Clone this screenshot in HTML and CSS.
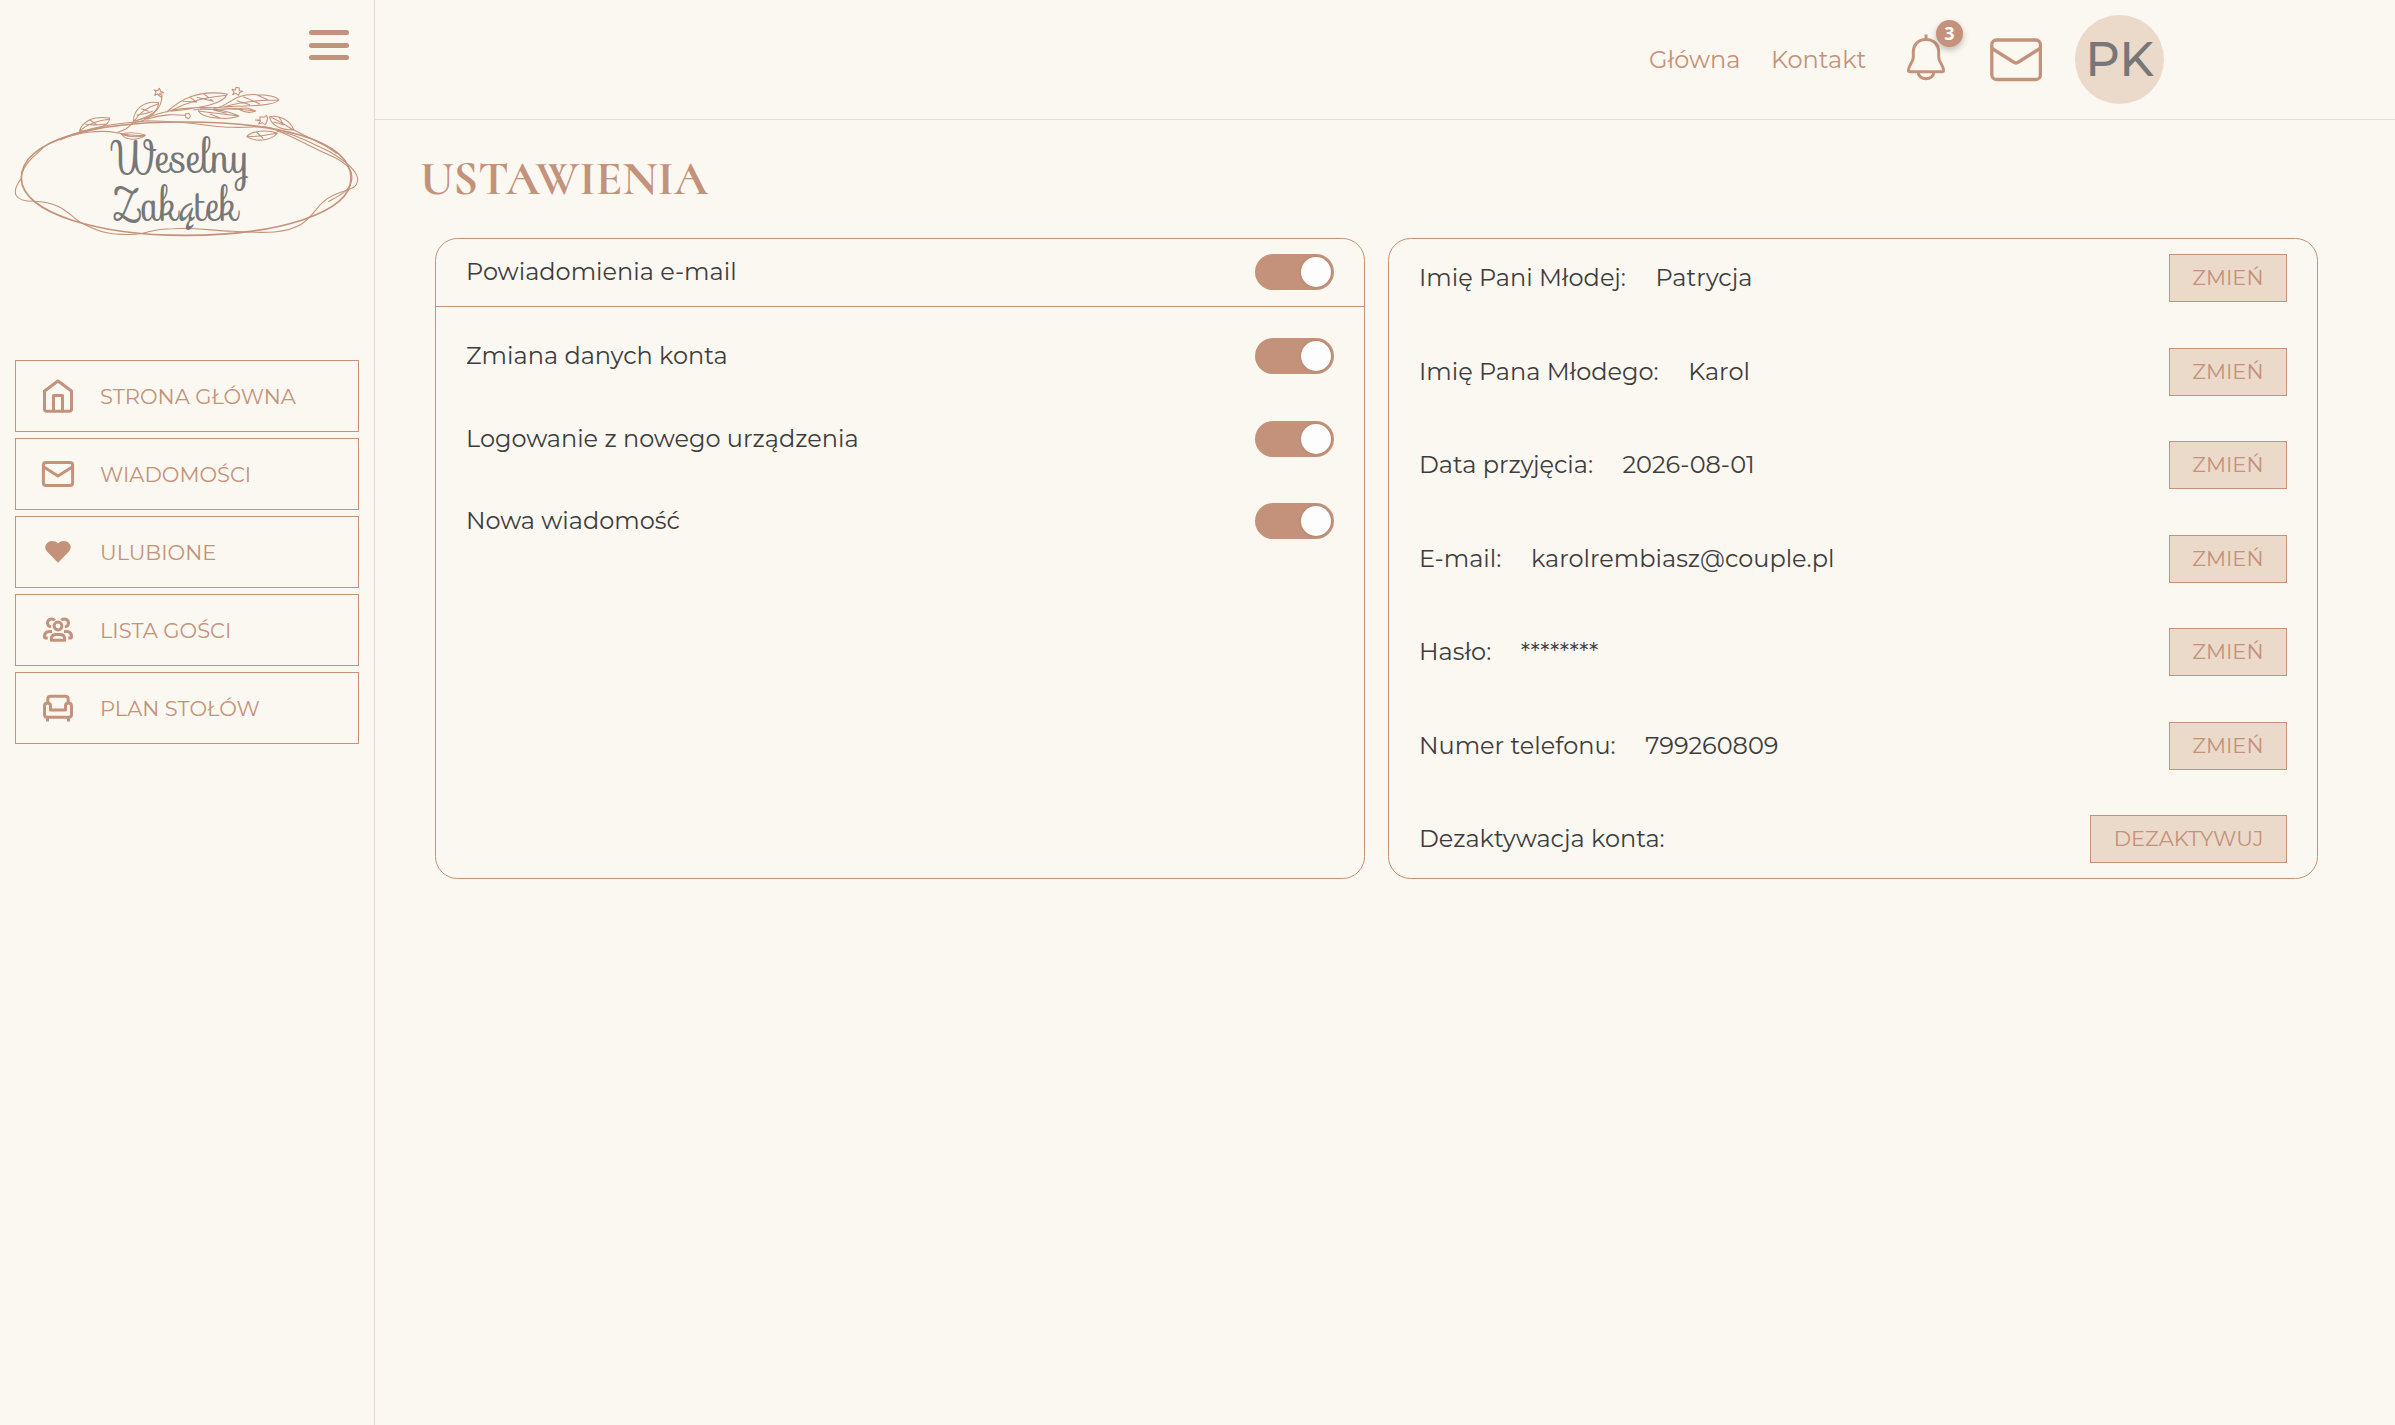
FILE: index.html
```
<!DOCTYPE html>
<html lang="pl">
<head>
<meta charset="utf-8">
<title>Weselny Zakątek – Ustawienia</title>
<link rel="stylesheet" href="styles.css">
</head>
<body>
<div class="layout">
  <aside class="sidebar">
    <button class="burger" aria-label="Menu"><i></i><i></i><i></i></button>
    <svg class="logo" viewBox="0 240 1125 480" fill="none">
      <g class="logo-thick">
        <path d="M64 535C64 420 290 364 555 366C830 366 1053 420 1053 535C1053 640 830 706 555 706C300 706 64 640 64 535Z"/>
      </g>
      <g class="logo-thin">
        <path d="M64 535C30 580 45 604 100 604C190 608 200 640 240 666C300 700 340 706 405 703C450 700 450 686 520 686C600 684 620 690 700 694C800 700 860 700 905 672C950 640 950 610 1000 586C1050 562 1073 570 1073 535C1068 510 1040 485 990 456C930 426 880 400 830 394"/>
        <path d="M66 520C80 480 110 465 130 442C160 418 200 410 240 396C330 366 410 368 440 362C600 364 620 382 700 382C770 384 790 372 830 390C920 430 960 455 1000 470C1040 490 1060 510 1055 540C1050 570 1030 580 985 605"/>
        <path d="M180 420C230 398 300 388 350 398C380 402 370 408 437 406M437 406C410 424 375 420 364 402C390 396 415 398 437 406M368 404C390 412 410 412 434 407"/>
        <path d="M238 394C245 370 270 346 329 354C328 380 290 388 238 394ZM240 392C270 368 300 360 328 358M256 372C275 376 290 376 316 372M270 360L290 374"/>
        <path d="M350 398C385 388 388 378 400 366C400 330 430 300 476 308C474 340 440 352 402 364M402 364C420 336 445 320 474 312M410 345C430 344 440 342 458 334M424 326L446 334"/>
        <path d="M402 368C440 366 488 330 486 285M478 282L486 286L484 292L472 282L464 286L468 276L463 270L473 272L478 265L482 274L491 278L480 280Z"/>
        <path d="M405 362C450 356 460 342 495 336C560 318 640 322 720 326M440 358C490 340 530 344 556 346M500 336C540 300 590 268 682 282C670 312 610 322 512 334M512 332C570 302 620 292 680 286M548 304L590 306L570 292M590 292L640 304L612 282"/>
        <path d="M556 342L566 340L572 348L566 356L557 352ZM580 330C620 322 680 330 717 348C690 360 610 358 594 332M594 332C640 340 680 342 714 348M630 342L660 354M640 330L680 340"/>
        <path d="M640 326C690 322 690 280 770 284C800 284 830 290 837 300C820 318 750 318 670 320M675 320C720 306 760 300 834 300M710 302L750 314M730 290L780 312M770 284L805 300"/>
        <path d="M696 268L706 270L708 262L718 264L718 272L728 274L718 278L716 286L708 280L698 284L702 276ZM716 328C735 320 750 326 767 333C750 340 730 336 716 328M600 326C660 334 680 320 760 332"/>
        <path d="M766 360L780 360L780 350L792 352L800 346L803 356L800 366L796 374L786 368L776 372L782 362ZM808 350C840 344 870 362 882 390C850 390 816 382 808 350M812 352C840 364 860 378 880 390M836 350L850 372M820 366L858 376"/>
        <path d="M740 410C755 392 800 388 832 400C810 424 764 426 740 410M742 410C780 410 800 406 830 400M770 396L790 416M882 390C930 416 990 440 1010 462"/>
      </g>
      <text class="logo-text" x="340" y="518" font-size="138" textLength="410" lengthAdjust="spacingAndGlyphs">Weselny</text>
      <text class="logo-text" x="338" y="662" font-size="138" textLength="378" lengthAdjust="spacingAndGlyphs">Zakątek</text>
    </svg>
    <nav class="menu">
      <a class="menu-item"><svg viewBox="0 0 36 36"><path d="M18 3L31.500 13V31q0 2.300-2.300 2.300H6.800q-2.300 0-2.300-2.300V13ZM13.500 33V17.500h9V33"/></svg><span>STRONA GŁÓWNA</span></a>
      <a class="menu-item"><svg viewBox="0 0 36 36"><rect x="3.400" y="6.400" width="29.200" height="23" rx="2.500"/><path d="M3.800 11L18 20L32.200 11"/></svg><span>WIADOMOŚCI</span></a>
      <a class="menu-item"><svg viewBox="0 0 36 36"><path class="solid" d="M18 28.700L7 17.600C2.500 12 7.500 7 12 7Q15.800 7 18 9.300Q20.200 7 24 7C28.500 7 33.500 12 29 17.600Z"/></svg><span>ULUBIONE</span></a>
      <a class="menu-item"><svg viewBox="0 0 36 36"><circle cx="18" cy="14" r="3.900"/><path d="M11.300 28.300v-1.500q0-4.300 5-4.300h3.400q5 0 5 4.300v1.500zM14.800 8.300C12.500 5.800 7.500 7 7.500 11Q7.600 14.600 11.200 14.700M21.200 8.300C23.500 5.800 28.500 7 28.500 11Q28.400 14.600 24.800 14.700M12 19.500H9.500Q4.500 19.500 4.500 24.700Q4.500 26 6 26H7.700M24 19.500H26.500Q31.500 19.500 31.500 24.700Q31.500 26 30 26H28.300"/></svg><span>LISTA GOŚCI</span></a>
      <a class="menu-item"><svg viewBox="0 0 36 36"><path d="M7.800 13V9q0-2.700 3-2.700h14.400q3 0 3 2.700V13M10.500 16q0-3-3-3t-3 3V24.500q0 2.700 2.700 2.700h21.600q2.700 0 2.700-2.700V16q0-3-3-3t-3 3V20H10.500ZM7.500 27.500V31.500M28.500 27.500V31.500"/></svg><span>PLAN STOŁÓW</span></a>
    </nav>
  </aside>
  <div class="page">
    <header class="topbar">
      <a class="link">Główna</a>
      <a class="link kontakt">Kontakt</a>
      <div class="bell">
        <svg viewBox="0 0 40 50" width="40" height="50"><path d="M20 2.500V8M20 7.500C11 7.500 7.300 14 7.300 20V25C7.300 30.500 2.500 32.500 2.500 38.500Q2.500 39.700 4 39.700H36Q37.500 39.700 37.500 38.500C37.500 32.500 32.700 30.500 32.700 25V20C32.700 14 29 7.500 20 7.500ZM12 40C13 49 27 49 28 40"/></svg>
        <span class="badge">3</span>
      </div>
      <svg class="mail" viewBox="0 0 52 44" width="52" height="44"><rect x="1.800" y="2" width="48.600" height="39.500" rx="4.500"/><path d="M2 10.500L23.500 24Q26 26 28.500 24L50 10.500"/></svg>
      <div class="avatar">PK</div>
    </header>
    <main class="content">
      <h1>USTAWIENIA</h1>
      <div class="cards">
        <section class="card notices">
          <div class="row head"><span>Powiadomienia e-mail</span><i class="toggle"></i></div>
          <div class="row"><span>Zmiana danych konta</span><i class="toggle"></i></div>
          <div class="row"><span>Logowanie z nowego urządzenia</span><i class="toggle"></i></div>
          <div class="row"><span>Nowa wiadomość</span><i class="toggle"></i></div>
        </section>
        <section class="card account">
          <div class="row"><span>Imię Pani Młodej:</span><span class="value">Patrycja</span><button class="btn">ZMIEŃ</button></div>
          <div class="row"><span>Imię Pana Młodego:</span><span class="value">Karol</span><button class="btn">ZMIEŃ</button></div>
          <div class="row"><span>Data przyjęcia:</span><span class="value">2026-08-01</span><button class="btn">ZMIEŃ</button></div>
          <div class="row"><span>E-mail:</span><span class="value">karolrembiasz@couple.pl</span><button class="btn">ZMIEŃ</button></div>
          <div class="row"><span>Hasło:</span><span class="value">********</span><button class="btn">ZMIEŃ</button></div>
          <div class="row"><span>Numer telefonu:</span><span class="value">799260809</span><button class="btn">ZMIEŃ</button></div>
          <div class="row"><span>Dezaktywacja konta:</span><button class="btn">DEZAKTYWUJ</button></div>
        </section>
      </div>
    </main>
  </div>
</div>
</body>
</html>
```
FILE: styles.css
```
* { box-sizing: border-box; }
body {
  margin: 0;
  background: #fbf8f1;
  color: #3d3d3d;
  font: 400 24px/30px Montserrat, Inter, sans-serif;
}
svg { fill: none; stroke: #c4927a; stroke-width: 3; stroke-linejoin: round; }
.layout { display: flex; height: 1425px; }

.sidebar {
  width: 375px;
  flex: none;
  display: flex;
  flex-direction: column;
  border-right: 1px solid #ebd9ca;
}
.burger {
  align-self: flex-end;
  display: flex;
  flex-direction: column;
  gap: 7.5px;
  width: 40px;
  margin: 30px 25px 20px 0;
  padding: 0;
  border: 0;
  background: none;
}
.burger i { height: 5px; border-radius: 2.5px; background: #c4927a; }
.logo { width: 375px; height: 160px; margin-bottom: 120px; }
.logo-thick { stroke-width: 5; }
.logo-thin { stroke-width: 3.2; }
.logo-text { fill: #777; stroke: none; font-family: Sofia, "Marck Script", "Liberation Serif", serif; }

.menu { display: flex; flex-direction: column; gap: 6px; padding: 0 15px; }
.menu-item {
  display: flex;
  align-items: center;
  gap: 24px;
  height: 72px;
  padding-left: 24px;
  border: 1px solid #c4927a;
  color: #c4927a;
  font-size: 21px;
}
.menu-item svg { width: 36px; height: 36px; }
.menu-item span { padding-top: 1px; }
.solid { fill: #c4927a; stroke: none; }

.page { flex: 1; }
.topbar {
  display: flex;
  align-items: center;
  height: 120px;
  padding-left: 1274px;
  border-bottom: 1px solid #ebd9ca;
  color: #c4927a;
}
.link { width: 93px; }
.kontakt { width: 97px; margin-left: 29px; }
.bell { position: relative; height: 50px; margin-left: 38px; width: 40px; margin-top: -5px; }
.badge {
  position: absolute;
  left: 30px;
  top: -12px;
  width: 27px;
  height: 27px;
  border-radius: 50%;
  background: #c4927a;
  color: #fff;
  font: 700 18px/27px "Noto Sans", sans-serif;
  text-align: center;
  box-shadow: 0 3px 6px rgba(0, 0, 0, .25);
}
.mail { margin-left: 44px; stroke-width: 3.3px; }
.avatar {
  width: 89px;
  height: 89px;
  margin-left: 33px;
  border-radius: 50%;
  background: #ebd9ca;
  color: #777;
  font: 500 48px/89px Montserrat, Inter, sans-serif;
  text-align: center;
}

.content { padding: 29px 77px 0 45px; }
h1 {
  margin: 0;
  height: 89px;
  color: #c4927a;
  font: 700 48px/60px Cormorant, "Liberation Serif", serif;
}
.cards { display: grid; grid-template-columns: 930px 930px; gap: 23px; padding-left: 15px; }
.card { display: flex; flex-direction: column; height: 641px; border: 1px solid #c4927a; border-radius: 22.5px; }
.row { display: flex; align-items: center; padding: 0 30px; white-space: nowrap; }
.notices .row { justify-content: space-between; height: 82.7px; }
.notices .head { height: 68px; margin-bottom: 7.6px; padding-bottom: 1px; border-bottom: 1px solid #c4927a; }
.toggle {
  display: flex;
  justify-content: flex-end;
  width: 79px;
  height: 36px;
  padding: 3px;
  border-radius: 18px;
  background: #c4927a;
}
.toggle::after { content: ""; width: 30px; border-radius: 50%; background: #fdfdfd; box-shadow: 0 0 3px rgba(0, 0, 0, .15); }
.account { justify-content: space-between; padding: 15px 0; }
.account .row { height: 48px; }
.value { margin-left: 29.5px; }
.btn {
  height: 48px;
  margin-left: auto;
  padding: 0 22.5px;
  border: 1px solid #c4927a;
  background: #ebd9ca;
  color: #c4927a;
  font: 400 21px/30px Montserrat, Inter, sans-serif;
}
```
